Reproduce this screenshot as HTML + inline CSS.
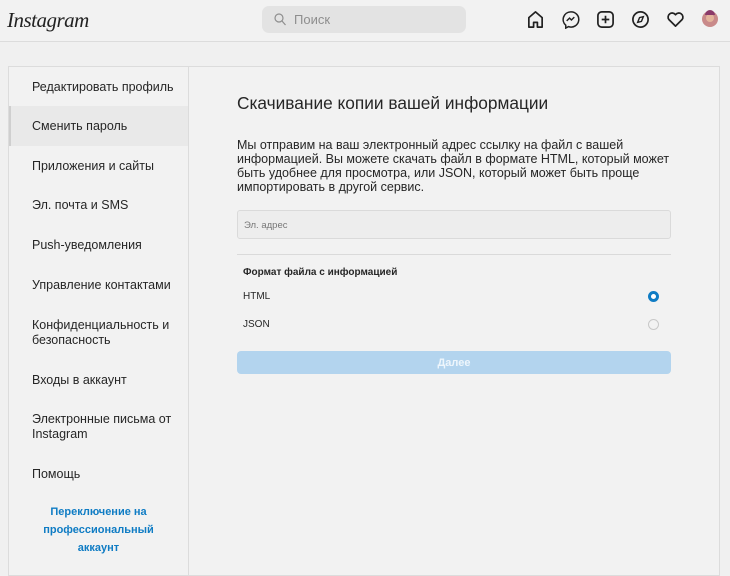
<!DOCTYPE html>
<html><head><meta charset="utf-8"><style>
*{margin:0;padding:0;box-sizing:border-box}
body{width:730px;height:565px;overflow:hidden;background:#f0f0f0;font-family:"Liberation Sans",sans-serif;color:#262626;position:relative}
.hdr{position:absolute;left:0;top:0;width:730px;height:42px;background:#f2f2f2;border-bottom:1px solid #dcdcdc}
.logo{position:absolute;left:7px;top:8px;font-family:"Liberation Serif",serif;font-style:italic;font-size:21px;color:#222;letter-spacing:-0.5px}
.search{position:absolute;left:262px;top:6px;width:204px;height:27px;background:#e3e3e3;border-radius:7px;font-size:13px;color:#8e8e8e;padding:6px 0 0 32px}
.search svg{position:absolute;left:12px;top:7px}
.icons svg{position:absolute;top:10px}
.card{position:absolute;left:8px;top:66px;width:712px;height:510px;background:#f2f2f2;border:1px solid #dcdcdc}
.side{position:absolute;left:0;top:0;width:180px;height:100%;border-right:1px solid #dcdcdc}
.it{position:absolute;left:0;width:179px;padding-left:23px;font-size:12.5px;line-height:15px;color:#262626;white-space:nowrap}
.sel{background:#e9e9e9;border-left:2px solid #cfcfcf;padding-left:21px}
.pro{position:absolute;left:0;width:179px;top:436px;text-align:center;font-size:11px;font-weight:bold;color:#0f7cc4;line-height:18px}
.main{position:absolute;left:228px;top:0}
h1{position:absolute;top:26px;left:0;font-weight:normal;font-size:17.3px;white-space:nowrap;color:#262626}
.p{position:absolute;top:71px;left:0;width:450px;font-size:12.5px;line-height:14px;color:#262626}
.inp{position:absolute;top:143px;left:0;width:434px;height:29px;background:#ededed;border:1px solid #dadada;border-radius:3px;font-size:9.5px;color:#777;padding:9px 0 0 6px}
.hr{position:absolute;top:187px;left:0;width:434px;border-top:1px solid #dadada}
.t{position:absolute;left:6px;font-size:10px;color:#262626;white-space:nowrap}
.r{position:absolute;left:411px;width:11px;height:11px;border-radius:50%}
.btn{position:absolute;top:284px;left:0;width:434px;height:23px;background:#b3d4ee;border-radius:4px;color:#eef6fc;font-size:11px;font-weight:bold;text-align:center;line-height:24px}
</style></head><body>
<div class="hdr">
<div class="logo">Instagram</div>
<div class="search"><svg width="12" height="13" viewBox="0 0 12 13"><circle cx="5" cy="5" r="4" fill="none" stroke="#8e8e8e" stroke-width="1.2"/><path d="M8 8l3.5 4" stroke="#8e8e8e" stroke-width="1.2"/></svg>Поиск</div>
<div class="icons">
<svg style="left:526px" width="19" height="19" viewBox="0 0 20 20"><path d="M3 18V8l7-6 7 6v10h-5v-5h-4v5z" fill="none" stroke="#222" stroke-width="1.8" stroke-linejoin="round"/></svg>
<svg style="left:561px" width="19" height="19" viewBox="0 0 20 20"><path d="M10 2a8 8 0 0 0-5 14v3l3-1.5A8 8 0 1 0 10 2z" fill="none" stroke="#222" stroke-width="1.6"/><path d="M6 11.5l3-3 2 2 3-3" fill="none" stroke="#222" stroke-width="1.5"/></svg>
<svg style="left:596px" width="19" height="19" viewBox="0 0 20 20"><rect x="2" y="2" width="16" height="16" rx="4" fill="none" stroke="#222" stroke-width="1.8"/><path d="M10 6v8M6 10h8" stroke="#222" stroke-width="1.8"/></svg>
<svg style="left:631px" width="19" height="19" viewBox="0 0 20 20"><circle cx="10" cy="10" r="8" fill="none" stroke="#222" stroke-width="1.8"/><path d="M13 7l-2 5-4 1 2-5z" fill="none" stroke="#222" stroke-width="1.5"/></svg>
<svg style="left:666px" width="19" height="19" viewBox="0 0 20 20"><path d="M10 17L3 10a4 4 0 0 1 7-5 4 4 0 0 1 7 5z" fill="none" stroke="#222" stroke-width="1.8" stroke-linejoin="round"/></svg>
<svg style="left:701px" width="18" height="18" viewBox="0 0 18 18"><circle cx="9" cy="9" r="8" fill="#c98a8a"/><circle cx="9" cy="8" r="4" fill="#e3b49c"/><path d="M4 5a5 5 0 0 1 10 0" fill="#8b3a6a"/></svg>
</div>
</div>
<div class="card">
<div class="side">
<div class="it" style="top:13px">Редактировать профиль</div>
<div class="it sel" style="top:39px;height:40px;padding-top:13px">Сменить пароль</div>
<div class="it" style="top:92px">Приложения и сайты</div>
<div class="it" style="top:131px">Эл. почта и SMS</div>
<div class="it" style="top:171px">Push-уведомления</div>
<div class="it" style="top:211px">Управление контактами</div>
<div class="it" style="top:251px">Конфиденциальность и<br>безопасность</div>
<div class="it" style="top:306px">Входы в аккаунт</div>
<div class="it" style="top:345px">Электронные письма от<br>Instagram</div>
<div class="it" style="top:400px">Помощь</div>
<div class="pro">Переключение на<br>профессиональный<br>аккаунт</div>
</div>
<div class="main">
<h1>Скачивание копии вашей информации</h1>
<div class="p">Мы отправим на ваш электронный адрес ссылку на файл с вашей информацией. Вы можете скачать файл в формате HTML, который может быть удобнее для просмотра, или JSON, который может быть проще импортировать в другой сервис.</div>
<div class="inp">Эл. адрес</div>
<div class="hr"></div>
<div class="t" style="top:200px;font-weight:bold">Формат файла с информацией</div>
<div class="t" style="top:224px">HTML</div>
<div class="r" style="top:224px;border:3px solid #0f7cc4;background:#fff"></div>
<div class="t" style="top:252px">JSON</div>
<div class="r" style="top:252px;border:1px solid #c8c8c8"></div>
<div class="btn">Далее</div>
</div>
</div>
</body></html>
